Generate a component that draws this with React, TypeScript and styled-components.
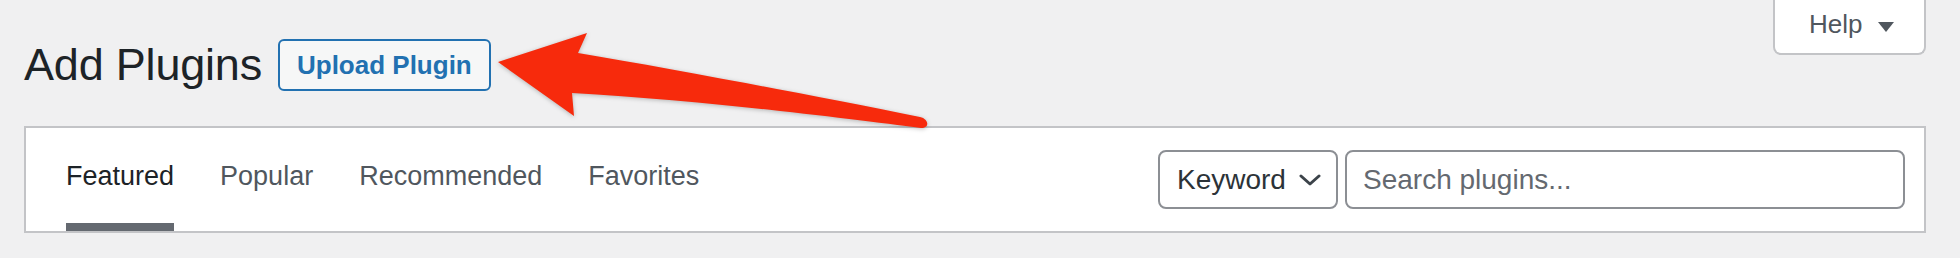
import React from 'react';
import styled, { createGlobalStyle } from 'styled-components';

const GlobalStyle = createGlobalStyle`
  html, body {
    margin: 0;
    padding: 0;
    background: #f0f0f1;
  }
  body {
    font-family: "Liberation Sans", Arial, sans-serif;
    color: #1d2327;
  }
`;

const Page = styled.div`
  position: relative;
  width: 1960px;
  height: 258px;
  overflow: hidden;
  background: #f0f0f1;
`;

const Header = styled.div`
  display: flex;
  justify-content: space-between;
  align-items: flex-start;
  padding: 0 34px 0 24px;
`;

const TitleGroup = styled.div`
  display: flex;
  align-items: center;
  gap: 16px;
  margin-top: 39px;
`;

const Title = styled.h1`
  margin: 0;
  font-size: 45px;
  font-weight: 400;
  letter-spacing: -0.2px;
  color: #1d2327;
  line-height: 1.15;
`;

const ActionButton = styled.a`
  display: flex;
  align-items: center;
  box-sizing: border-box;
  height: 52px;
  padding: 0 17px;
  border: 2px solid #2271b1;
  border-radius: 6px;
  background: #f6f7f7;
  color: #2271b1;
  font-size: 26px;
  font-weight: 700;
  text-decoration: none;
`;

const HelpTab = styled.button`
  display: flex;
  align-items: center;
  gap: 16px;
  box-sizing: border-box;
  width: 153px;
  height: 55px;
  padding: 0 0 4px 34px;
  border: 2px solid #c3c4c7;
  border-top: none;
  border-radius: 0 0 8px 8px;
  background: #fff;
  color: #50575e;
  font-family: "Liberation Sans", Arial, sans-serif;
  font-size: 26px;
`;

const Caret = styled.span`
  width: 0;
  height: 0;
  border-left: 8px solid transparent;
  border-right: 8px solid transparent;
  border-top: 10px solid #50575e;
  margin-top: 4px;
`;

const FilterBar = styled.div`
  display: flex;
  justify-content: space-between;
  align-items: center;
  box-sizing: border-box;
  height: 107px;
  margin: 35px 34px 0 24px;
  padding: 0 19px 0 40px;
  border: 2px solid #c3c4c7;
  background: #fff;
`;

const Tabs = styled.ul`
  display: flex;
  gap: 46px;
  align-self: stretch;
  margin: 0;
  padding: 0;
  list-style: none;
`;

const Tab = styled.li<{ $active?: boolean }>`
  display: flex;
  align-items: center;
  box-sizing: border-box;
  padding-top: 2px;
  font-size: 27px;
  color: ${(p) => (p.$active ? '#1d2327' : '#50575e')};
  border-bottom: 8px solid ${(p) => (p.$active ? '#646970' : 'transparent')};
`;

const SearchForm = styled.div`
  display: flex;
  gap: 7px;
`;

const Select = styled.div`
  display: flex;
  align-items: center;
  justify-content: space-between;
  box-sizing: border-box;
  width: 180px;
  height: 59px;
  padding: 0 15px 0 17px;
  border: 2px solid #8c8f94;
  border-radius: 8px;
  font-size: 28px;
  color: #2c3338;
`;

const SearchInput = styled.input`
  box-sizing: border-box;
  width: 560px;
  height: 59px;
  padding: 0 16px;
  border: 2px solid #8c8f94;
  border-radius: 8px;
  font-family: "Liberation Sans", Arial, sans-serif;
  font-size: 28px;
  color: #2c3338;
  outline: none;
  &::placeholder {
    color: #646970;
  }
`;

const Overlay = styled.svg`
  position: absolute;
  left: 0;
  top: 0;
  pointer-events: none;
  filter: drop-shadow(0 1px 2px rgba(0, 0, 0, 0.25));
`;

const tabs = ['Featured', 'Popular', 'Recommended', 'Favorites'];

export default function App() {
  return (
    <Page>
      <GlobalStyle />
      <Header>
        <TitleGroup>
          <Title>Add Plugins</Title>
          <ActionButton href="#">Upload Plugin</ActionButton>
        </TitleGroup>
        <HelpTab>
          Help
          <Caret />
        </HelpTab>
      </Header>
      <FilterBar>
        <Tabs>
          {tabs.map((t, i) => (
            <Tab key={t} $active={i === 0}>
              {t}
            </Tab>
          ))}
        </Tabs>
        <SearchForm>
          <Select>
            Keyword
            <svg width="22" height="12" viewBox="0 0 22 12">
              <path d="M2 2 L11 10 L20 2" fill="none" stroke="#3c434a" strokeWidth="3" strokeLinecap="round" strokeLinejoin="round" />
            </svg>
          </Select>
          <SearchInput placeholder="Search plugins..." />
        </SearchForm>
      </FilterBar>
      <Overlay width="1960" height="258" viewBox="0 0 1960 258">
        <path
          d="M498 62 L587 33 L578 53 C680 70 820 97 920 117 C929 119 930 128 921 128 C850 119 700 100 572 93 L574 116 Z"
          fill="#f72a0c"
        />
      </Overlay>
    </Page>
  );
}
